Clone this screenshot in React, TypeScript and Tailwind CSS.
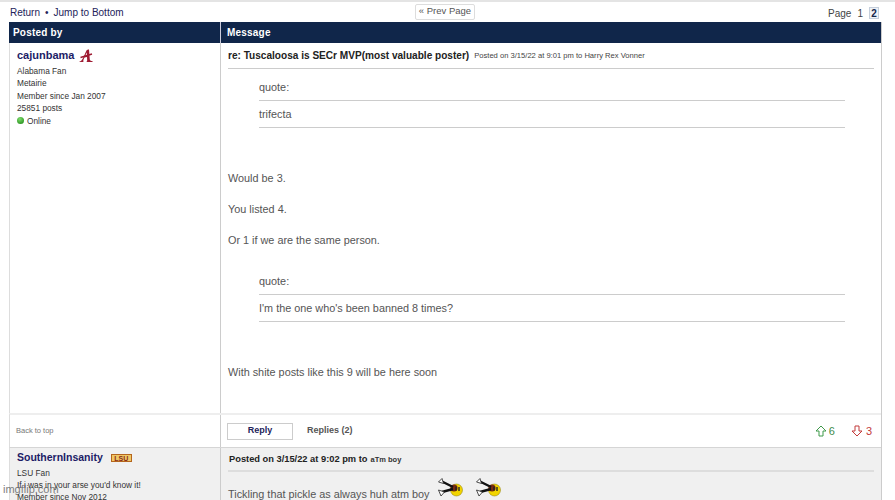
import React from 'react';

const TextBlock: React.FC<{ children: React.ReactNode }> = ({ children }) => (
  <p className="text-[10.85px] leading-[13px] text-[#555]">{children}</p>
);

const Quote: React.FC<{ text: string }> = ({ text }) => (
  <div className="ml-[31px] w-[586px] text-[10.85px] leading-[13px] text-[#555]">
    <div className="h-[27px] pt-[7px] border-b border-[#ccc]">quote:</div>
    <div className="h-[27px] pt-[7px] border-b border-[#ccc]">{text}</div>
  </div>
);

const BamaLogo = () => (
  <svg width="14" height="14" viewBox="0 0 14 14" fill="none">
    <path d="M0.5 12.5 C3 12.5 4.5 8 7.5 1.5 C8 0.5 9 0.5 10 0.5 L10.8 10.5 C11 11.8 12.2 12 13.5 12 L13.5 13 L7.5 13 L8.2 11.5 L8 8 L5.5 8.5 C4.5 10.5 4 11.5 4.5 13 L0.5 13 Z M6.2 6.8 L8 6.4 L7.8 3.5 Z" fill="#9e1b32" fillRule="evenodd" />
    <path d="M1.5 8.5 L13 5" stroke="#9e1b32" strokeWidth="1.4" />
  </svg>
);

const Tickle = () => (
  <svg width="25" height="20" viewBox="0 0 25 20">
    <circle cx="18.5" cy="12" r="6" fill="#f2d400" stroke="#8a7a00" strokeWidth="0.5" />
    <circle cx="16" cy="10" r="3.6" fill="#7a2a10" />
    <path d="M18 8.5 v4 M21 9 v4" stroke="#222" strokeWidth="1.4" />
    <path d="M3 3 L15 9 M4 14 L15 11" stroke="#111" strokeWidth="2.4" />
    <path d="M4 0.5 L0.5 4 L5.5 5.5 Z M0.5 12 L3 18 L6.5 14 Z" fill="#fff" stroke="#222" strokeWidth="0.8" />
  </svg>
);

const UpArrow = () => (
  <svg width="12" height="12" viewBox="0 0 12 12" fill="none">
    <path d="M6 1 L11 6 L8 6 L8 11 L4 11 L4 6 L1 6 Z" stroke="#3f9a4b" strokeWidth="1" strokeLinejoin="miter" />
  </svg>
);

const DownArrow = () => (
  <svg width="12" height="12" viewBox="0 0 12 12" fill="none">
    <path d="M6 11 L11 6 L8 6 L8 1 L4 1 L4 6 L1 6 Z" stroke="#c23a3a" strokeWidth="1" strokeLinejoin="miter" />
  </svg>
);

export default function App() {
  return (
    <div className="relative w-[895px] h-[500px] overflow-hidden bg-white font-['Liberation_Sans',Arial,sans-serif] border-t-2 border-[#e4e4e4]">
      {/* top nav */}
      <div className="h-[20px] pl-[10px] pr-[16px] flex items-center justify-between text-[#23235a]">
        <div className="w-[300px] text-[10px] pt-[1px] flex">
          <span>Return</span>
          <span className="mx-[5px]">•</span>
          <span>Jump to Bottom</span>
        </div>
        <div className="h-[16px] px-[3px] ml-[1px] flex items-center border border-[#ddd] rounded-[2px] text-[9.5px] text-[#555] mb-[1px]">
          « Prev Page
        </div>
        <div className="w-[300px] flex justify-end items-center text-[10px] text-[#444] gap-[6px] pt-[2px]">
          <span>Page</span>
          <span>1</span>
          <span className="w-[10px] h-[12px] flex items-center justify-center border border-[#c5cfdc] bg-[#eef1f6] font-bold text-[#14264a]">2</span>
        </div>
      </div>

      <div className="ml-[9px] w-[873px] border-r border-[#ccc]">
        {/* header row */}
        <div className="h-[21px] flex bg-[#10264a] text-white text-[10px] font-bold tracking-[0.2px]">
          <div className="w-[212px] pl-[4px] flex items-center border-r border-[#ccd]">Posted by</div>
          <div className="pl-[6px] flex items-center">Message</div>
        </div>

        {/* first post */}
        <div className="flex h-[370px] border-l border-[#ddd]">
          <div className="w-[211px] shrink-0 border-r border-[#ccc] pl-[7px] pt-[5px]">
            <div className="flex items-center gap-[5px] h-[15px]">
              <span className="text-[11px] font-bold text-[#1c1c66]">cajunbama</span>
              <BamaLogo />
            </div>
            <div className="text-[8.3px] leading-[12.4px] text-[#333] mt-[2px]">
              <div>Alabama Fan</div>
              <div>Metairie</div>
              <div>Member since Jan 2007</div>
              <div>25851 posts</div>
              <div className="flex items-center gap-[3px]">
                <span className="w-[7px] h-[7px] rounded-full bg-[radial-gradient(circle_at_40%_30%,#7ddc6a,#16800f)]" />
                Online
              </div>
            </div>
          </div>
          <div className="flex-1 pl-[7px] pr-[7px]">
            <div className="h-[26px] border-b border-[#ccc] flex items-center gap-[5px] pt-[1px]">
              <span className="text-[10.08px] font-bold text-[#222]">re: Tuscaloosa is SECr MVP(most valuable poster)</span>
              <span className="text-[7.6px] text-[#444]">Posted on 3/15/22 at 9:01 pm to Harry Rex Vonner</span>
            </div>
            <div className="pt-[5px]">
              <Quote text="trifecta" />
            </div>
            <div className="mt-[44px] flex flex-col gap-[18px]">
              <TextBlock>Would be 3.</TextBlock>
              <TextBlock>You listed 4.</TextBlock>
              <TextBlock>Or 1 if we are the same person.</TextBlock>
            </div>
            <div className="mt-[21px]">
              <Quote text="I'm the one who's been banned 8 times?" />
            </div>
            <div className="mt-[44px]">
              <TextBlock>With shite posts like this 9 will be here soon</TextBlock>
            </div>
          </div>
        </div>

        {/* post footer */}
        <div className="flex h-[35px] border-l border-[#ddd] border-t-2 border-t-[#eee] border-b border-b-[#d5d5d5]">
          <div className="w-[211px] shrink-0 border-r border-[#ccc] pl-[6px] flex items-center text-[7.5px] text-[#777]">
            Back to top
          </div>
          <div className="flex-1 flex items-center pl-[6px] pr-[9px]">
            <div className="w-[66px] h-[17px] flex items-center justify-center border border-[#ccc] text-[9px] font-bold text-[#23235a]">Reply</div>
            <span className="ml-[14px] text-[9px] font-bold text-[#555]">Replies (2)</span>
            <div className="ml-auto flex items-center gap-[2px] text-[11px] text-[#3f8a4b]">
              <UpArrow />
              <span>6</span>
            </div>
            <div className="ml-[16px] flex items-center gap-[3px] text-[11px] text-[#c23a3a]">
              <DownArrow />
              <span>3</span>
            </div>
          </div>
        </div>

        {/* second post */}
        <div className="flex h-[60px] bg-[#f0f0f0] border-l border-[#ddd]">
          <div className="w-[211px] shrink-0 border-r border-[#ccc] pl-[7px] pt-[2px]">
            <div className="flex items-center gap-[8px] h-[16px]">
              <span className="text-[10.5px] font-bold text-[#1c1c66]">SouthernInsanity</span>
              <span className="h-[8px] w-[21px] flex items-center justify-center bg-[#efc765] border border-[#b5651d] text-[7px] leading-none font-bold text-[#8a2a1a]">LSU</span>
            </div>
            <div className="text-[8.3px] leading-[12.2px] text-[#333] mt-[1px]">
              <div>LSU Fan</div>
              <div>If i was in your arse you'd know it!</div>
              <div>Member since Nov 2012</div>
            </div>
          </div>
          <div className="flex-1 pl-[8px] pr-[7px]">
            <div className="h-[24px] border-b-2 border-[#ddd] flex items-center gap-[3px] pt-[1px] ml-[-1px]">
              <span className="text-[9.3px] font-bold text-[#222] ml-[1px]">Posted on 3/15/22 at 9:02 pm to</span>
              <span className="text-[7.5px] font-bold text-[#333]">aTm boy</span>
            </div>
            <div className="flex items-start mt-[6px] ml-[-1px]">
              <span className="text-[10.85px] leading-[13px] text-[#555] mt-[10px]">Tickling that pickle as always huh atm boy</span>
              <span className="ml-[8px]"><Tickle /></span>
              <span className="ml-[13px]"><Tickle /></span>
            </div>
          </div>
        </div>
      </div>

      {/* imgflip watermark */}
      <span className="absolute left-[3px] top-[480px] text-[11px] leading-[14px] text-[#555] opacity-75">imgflip.com</span>
    </div>
  );
}
